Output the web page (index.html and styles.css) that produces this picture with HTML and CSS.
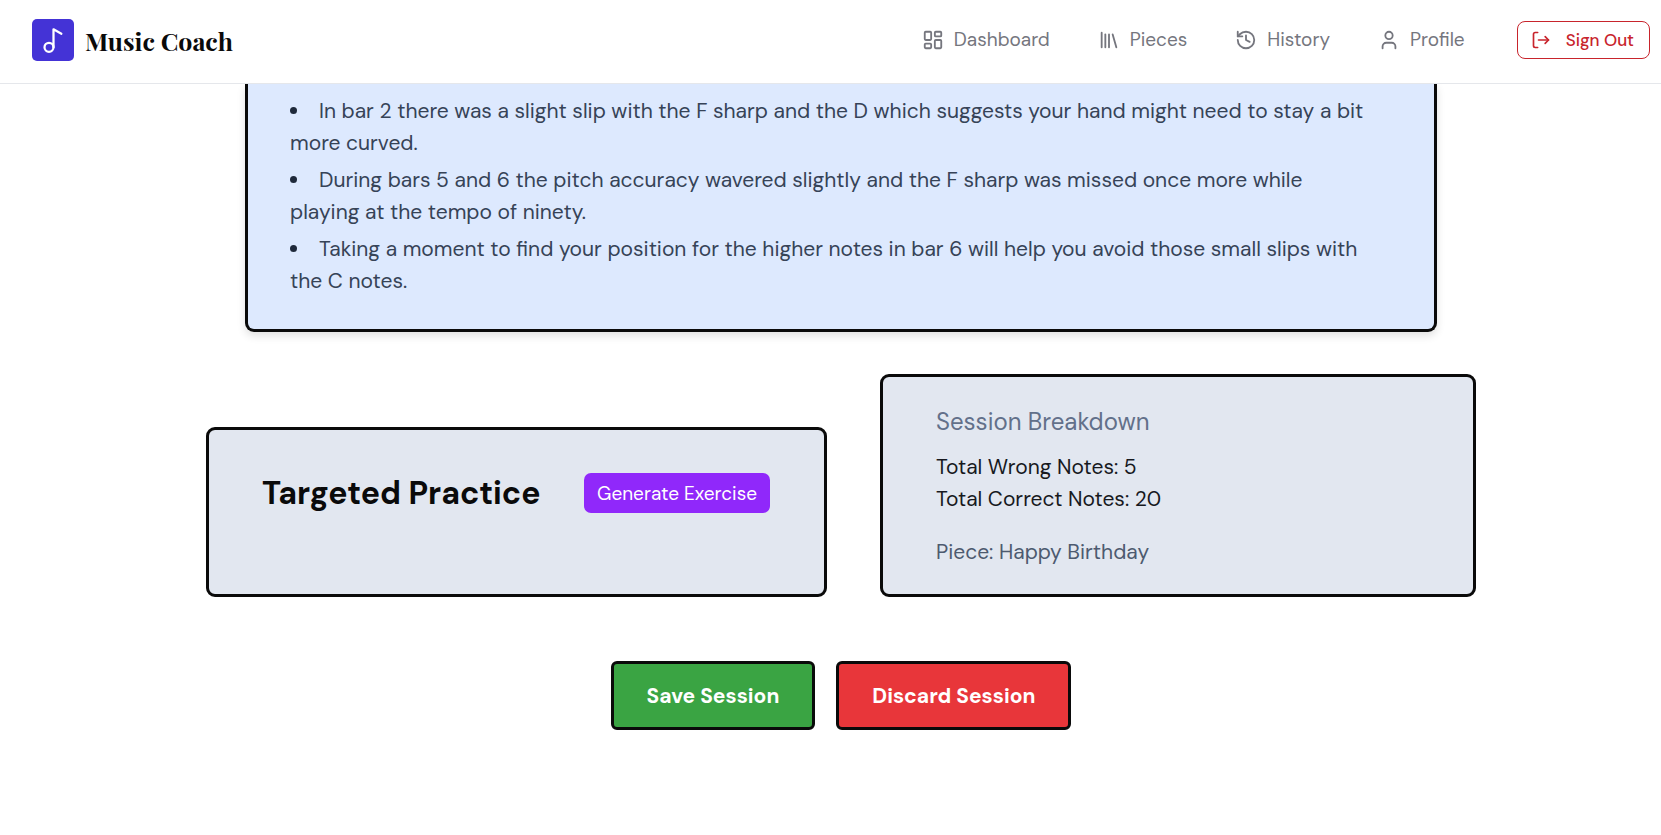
FILE: index.html
```html
<!DOCTYPE html>
<html lang="en">
<head>
<meta charset="utf-8">
<title>Music Coach</title>
<link rel="stylesheet" href="styles.css">
</head>
<body>
<header class="topbar">
  <a class="brand" href="#">
    <span class="brand-mark">
      <svg viewBox="0 0 24 24"><circle cx="8" cy="18" r="4"/><path d="M12 18V2l7 4"/></svg>
    </span>
    <span class="brand-name">Music Coach</span>
  </a>
  <nav class="nav">
    <a class="nav-link" href="#">
      <svg viewBox="0 0 24 24"><rect x="3" y="3" width="7" height="9" rx="1"/><rect x="14" y="3" width="7" height="5" rx="1"/><rect x="14" y="12" width="7" height="9" rx="1"/><rect x="3" y="16" width="7" height="5" rx="1"/></svg>
      Dashboard
    </a>
    <a class="nav-link" href="#">
      <svg viewBox="0 0 24 24"><path d="m16 6 4 14"/><path d="M12 6v14"/><path d="M8 6v14"/><path d="M4 4v16"/></svg>
      Pieces
    </a>
    <a class="nav-link" href="#">
      <svg viewBox="0 0 24 24"><path d="M3 12a9 9 0 1 0 9-9 9.75 9.75 0 0 0-6.74 2.74L3 8"/><path d="M3 3v5h5"/><path d="M12 7v5l4 2"/></svg>
      History
    </a>
    <a class="nav-link" href="#">
      <svg viewBox="0 0 24 24"><path d="M19 21v-2a4 4 0 0 0-4-4H9a4 4 0 0 0-4 4v2"/><circle cx="12" cy="7" r="4"/></svg>
      Profile
    </a>
    <button class="sign-out" type="button">
      <svg viewBox="0 0 24 24"><path d="m17 16 4-4-4-4"/><path d="M21 12H9"/><path d="M8 21H5a2 2 0 0 1-2-2V5a2 2 0 0 1 2-2h3"/></svg>
      Sign Out
    </button>
  </nav>
</header>
<main class="page">
  <section class="feedback">
    <ul class="feedback-list">
      <li>In bar 2 there was a slight slip with the F sharp and the D which suggests your hand might need to stay a bit more curved.</li>
      <li>During bars 5 and 6 the pitch accuracy wavered slightly and the F sharp was missed once more while playing at the tempo of ninety.</li>
      <li>Taking a moment to find your position for the higher notes in bar 6 will help you avoid those small slips with the C notes.</li>
    </ul>
  </section>
  <div class="panels">
    <section class="panel practice">
      <h2 class="practice-title">Targeted Practice</h2>
      <button class="generate" type="button">Generate Exercise</button>
    </section>
    <section class="panel breakdown">
      <h3 class="breakdown-title">Session Breakdown</h3>
      <p>Total Wrong Notes: 5</p>
      <p>Total Correct Notes: 20</p>
      <p class="piece">Piece: Happy Birthday</p>
    </section>
  </div>
  <div class="actions">
    <button class="action save" type="button">Save Session</button>
    <button class="action discard" type="button">Discard Session</button>
  </div>
</main>
</body>
</html>
```
FILE: styles.css
```css
* { box-sizing: border-box; }

body {
  margin: 0;
  background: #fff;
  color: #0a0a0a;
  font: 21px/32px "DM Sans", "Open Sans", sans-serif;
}

h2, h3, p, ul { margin: 0; padding: 0; font-weight: 400; }
a { color: inherit; text-decoration: none; }
button { font-family: inherit; cursor: pointer; }

svg {
  fill: none;
  stroke: currentColor;
  stroke-width: 2;
  stroke-linecap: round;
  stroke-linejoin: round;
}

.topbar {
  position: sticky;
  top: 0;
  z-index: 1;
  display: flex;
  align-items: center;
  justify-content: space-between;
  height: 84px;
  padding: 0 11px 3px 32px;
  background: #fff;
  border-bottom: 1px solid #e5e7eb;
}

.brand { display: flex; align-items: center; gap: 11px; }

.brand-mark {
  display: flex;
  align-items: center;
  justify-content: center;
  width: 42px;
  height: 42px;
  border-radius: 5px;
  background: #4433d6;
  color: #fff;
}

.brand-mark svg { width: 27px; height: 27px; }

.brand-name {
  padding-top: 2px;
  font: 700 25px/32px "Playfair Display", "Liberation Serif", serif;
}

.nav { display: flex; align-items: center; gap: 48px; }

.nav-link {
  display: flex;
  align-items: center;
  gap: 10px;
  color: #75767e;
  font-size: 19px;
}

.nav-link svg { width: 22px; height: 22px; }

.sign-out {
  display: flex;
  align-items: center;
  gap: 15px;
  height: 38px;
  margin-left: 4px;
  padding: 0 15px 0 13px;
  border: 1px solid #c8242c;
  border-radius: 8px;
  background: #fff;
  color: #c8242c;
  font-size: 17px;
  font-weight: 500;
}

.sign-out svg { width: 20px; height: 20px; }

.page { padding: 0 185px 80px 206px; }

.feedback {
  margin: 0 39px;
  padding: 11px 66px 32px 42px;
  border: 3px solid #0a0a0a;
  border-top: 0;
  border-radius: 0 0 9px 9px;
  background: #dde9fe;
  color: #364357;
  box-shadow: 0 4px 8px rgba(0, 0, 0, 0.12);
}

.feedback-list {
  display: grid;
  gap: 5px;
  list-style: disc inside;
}

.feedback-list li::marker { color: #1e293b; }

.panels {
  display: grid;
  grid-template-columns: 621fr 596fr;
  align-items: end;
  gap: 53px;
  margin-top: 42px;
}

.panel {
  border: 3px solid #0a0a0a;
  border-radius: 9px;
  background: #e2e7f0;
}

.practice {
  display: flex;
  align-items: center;
  justify-content: space-between;
  padding: 43px 54px 81px 53px;
}

.practice-title { font-size: 32px; line-height: 40px; font-weight: 700; }

.generate {
  height: 40px;
  padding: 0 13px;
  border: 0;
  border-radius: 7px;
  background: #9028fa;
  color: #fff;
  font-size: 19px;
}

.breakdown { padding: 29px 53px 26px; color: #17191e; }
.breakdown-title { margin-bottom: 13px; color: #62708a; font-size: 24px; }
.piece { margin-top: 21px; color: #4d5a6f; }

.actions {
  display: flex;
  justify-content: center;
  gap: 21px;
  margin-top: 64px;
}

.action {
  height: 69px;
  padding: 0 33px;
  border: 3px solid #0a0a0a;
  border-radius: 6px;
  color: #fff;
  font-size: 21px;
  font-weight: 700;
}

.save { background: #3aa443; }
.discard { background: #e8363a; }
```
